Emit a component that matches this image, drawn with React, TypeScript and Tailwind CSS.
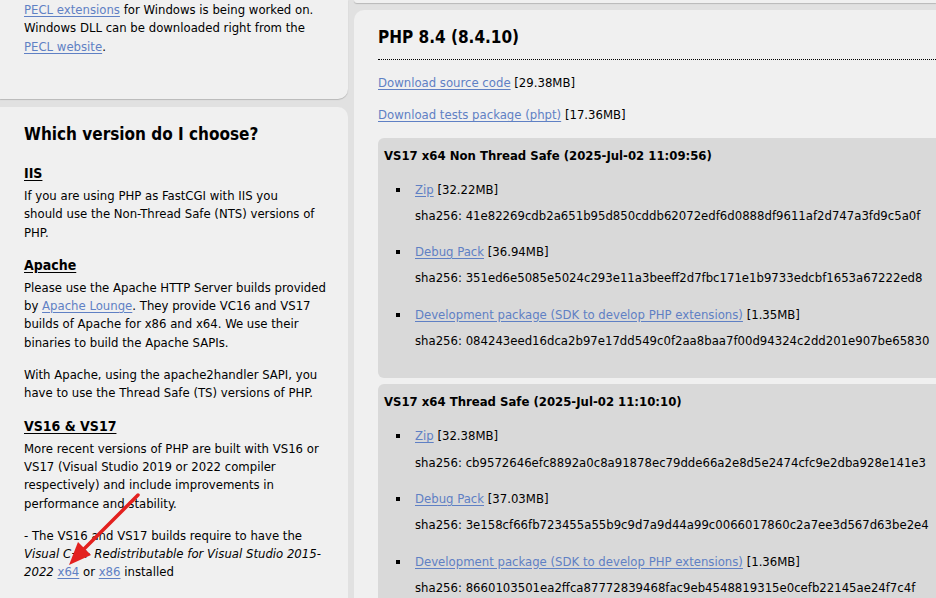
import type { ReactNode } from 'react'

const font = 'font-["DejaVu_Sans_Condensed","DejaVu_Sans",Tahoma,sans-serif]'

function A({ children }: { children: ReactNode }) {
  return <a href="#" className="text-[#5f80c4] underline underline-offset-[2px]">{children}</a>
}

function Lines({ lines }: { lines: ReactNode[] }) {
  return (
    <p className="whitespace-nowrap">
      {lines.map((l, i) => (
        <span key={i} className="block">{l}</span>
      ))}
    </p>
  )
}

function Heading({ children }: { children: ReactNode }) {
  return <h4 className="font-bold underline underline-offset-[2px] text-[14px] leading-[18px] mt-[14px] mb-[5px]">{children}</h4>
}

interface Build {
  title: string
  files: { label: string; size: string; sha: string }[]
}

const builds: Build[] = [
  {
    title: 'VS17 x64 Non Thread Safe (2025-Jul-02 11:09:56)',
    files: [
      { label: 'Zip', size: '[32.22MB]', sha: '41e82269cdb2a651b95d850cddb62072edf6d0888df9611af2d747a3fd9c5a0f' },
      { label: 'Debug Pack', size: '[36.94MB]', sha: '351ed6e5085e5024c293e11a3beeff2d7fbc171e1b9733edcbf1653a67222ed8' },
      { label: 'Development package (SDK to develop PHP extensions)', size: '[1.35MB]', sha: '084243eed16dca2b97e17dd549c0f2aa8baa7f00d94324c2dd201e907be65830' },
    ],
  },
  {
    title: 'VS17 x64 Thread Safe (2025-Jul-02 11:10:10)',
    files: [
      { label: 'Zip', size: '[32.38MB]', sha: 'cb9572646efc8892a0c8a91878ec79dde66a2e8d5e2474cfc9e2dba928e141e3' },
      { label: 'Debug Pack', size: '[37.03MB]', sha: '3e158cf66fb723455a55b9c9d7a9d44a99c0066017860c2a7ee3d567d63be2e4' },
      { label: 'Development package (SDK to develop PHP extensions)', size: '[1.36MB]', sha: '8660103501ea2ffca87772839468fac9eb4548819315e0cefb22145ae24f7c4f' },
    ],
  },
]

function BuildBox({ build }: { build: Build }) {
  return (
    <div className="bg-[#d9d9d9] rounded-l-[6px] pl-[6px] pt-[9px] pb-[28px] w-[600px] whitespace-nowrap">
      <h3 className="font-bold text-[13px] leading-[18px]">{build.title}</h3>
      <ul className="mt-[16px] flex flex-col gap-[18px]">
        {build.files.map((f) => (
          <li key={f.label} className="flex">
            <div className="w-[31px] shrink-0 pl-[12px] pt-[7px]">
              <div className="w-[4px] h-[4px] bg-black" />
            </div>
            <div>
              <div>
                <A>{f.label}</A> {f.size}
              </div>
              <div className="mt-[8px]">sha256: {f.sha}</div>
            </div>
          </li>
        ))}
      </ul>
    </div>
  )
}

export default function App() {
  return (
    <div className={`${font} relative h-[598px] w-[936px] overflow-hidden bg-[#e1e1e1] text-[13px] leading-[18.3px] text-black flex gap-[6px]`}>
      {/* left column */}
      <div className="w-[348px] shrink-0 flex flex-col gap-[8px]">
        <div className="h-[99px] shrink-0 bg-[#f0f0f0] rounded-br-[10px] shadow-[0_1px_1px_rgba(0,0,0,0.18)] px-[24px] pt-[1px]">
          <Lines
            lines={[
              <><A>PECL extensions</A> for Windows is being worked on.</>,
              'Windows DLL can be downloaded right from the',
              <><A>PECL website</A>.</>,
            ]}
          />
        </div>

        <div className="flex-1 bg-[#f0f0f0] rounded-tr-[10px] px-[24px] pt-[16px]">
          <h2 className="font-bold text-[17px] leading-[22px]">Which version do I choose?</h2>
          <div className="pt-[5px]">
            <Heading>IIS</Heading>
            <Lines
              lines={[
                'If you are using PHP as FastCGI with IIS you',
                'should use the Non-Thread Safe (NTS) versions of',
                'PHP.',
              ]}
            />
            <Heading>Apache</Heading>
            <Lines
              lines={[
                'Please use the Apache HTTP Server builds provided',
                <>by <A>Apache Lounge</A>. They provide VC16 and VS17</>,
                'builds of Apache for x86 and x64. We use their',
                'binaries to build the Apache SAPIs.',
              ]}
            />
            <div className="mt-[14px]">
              <Lines
                lines={[
                  'With Apache, using the apache2handler SAPI, you',
                  'have to use the Thread Safe (TS) versions of PHP.',
                ]}
              />
            </div>
            <Heading>VS16 &amp; VS17</Heading>
            <Lines
              lines={[
                'More recent versions of PHP are built with VS16 or',
                'VS17 (Visual Studio 2019 or 2022 compiler',
                'respectively) and include improvements in',
                'performance and stability.',
              ]}
            />
            <div className="mt-[14px]">
              <Lines
                lines={[
                  '- The VS16 and VS17 builds require to have the',
                  <i>Visual C++ Redistributable for Visual Studio 2015-</i>,
                  <><i>2022</i> <A>x64</A> or <A>x86</A> installed</>,
                ]}
              />
            </div>
          </div>
        </div>
      </div>

      {/* right column */}
      <div className="flex-1 flex flex-col gap-[7px] min-w-0">
        <div className="h-[3px] shrink-0 bg-[#f0f0f0] rounded-bl-[8px] shadow-[0_1px_1px_rgba(0,0,0,0.18)]" />
        <div className="flex-1 bg-[#f0f0f0] rounded-tl-[10px] pl-[24px] pt-[16px]">
          <h2 className="font-bold text-[17px] leading-[22px]">PHP 8.4 (8.4.10)</h2>
          <div className="mt-[11px] border-t border-dotted border-black" />
          <p className="mt-[14px]">
            <A>Download source code</A> [29.38MB]
          </p>
          <p className="mt-[14px]">
            <A>Download tests package (phpt)</A> [17.36MB]
          </p>
          <div className="mt-[13px] flex flex-col gap-[6px]">
            {builds.map((b) => (
              <BuildBox key={b.title} build={b} />
            ))}
          </div>
        </div>
      </div>

      {/* red annotation arrow */}
      <svg className="absolute inset-0 pointer-events-none" width="936" height="598" viewBox="0 0 936 598">
        <line x1="138" y1="495" x2="84" y2="549" stroke="#e3211f" strokeWidth="3.5" strokeLinecap="round" />
        <polygon points="69,565 91,555 78,542" fill="#e3211f" />
      </svg>
    </div>
  )
}
